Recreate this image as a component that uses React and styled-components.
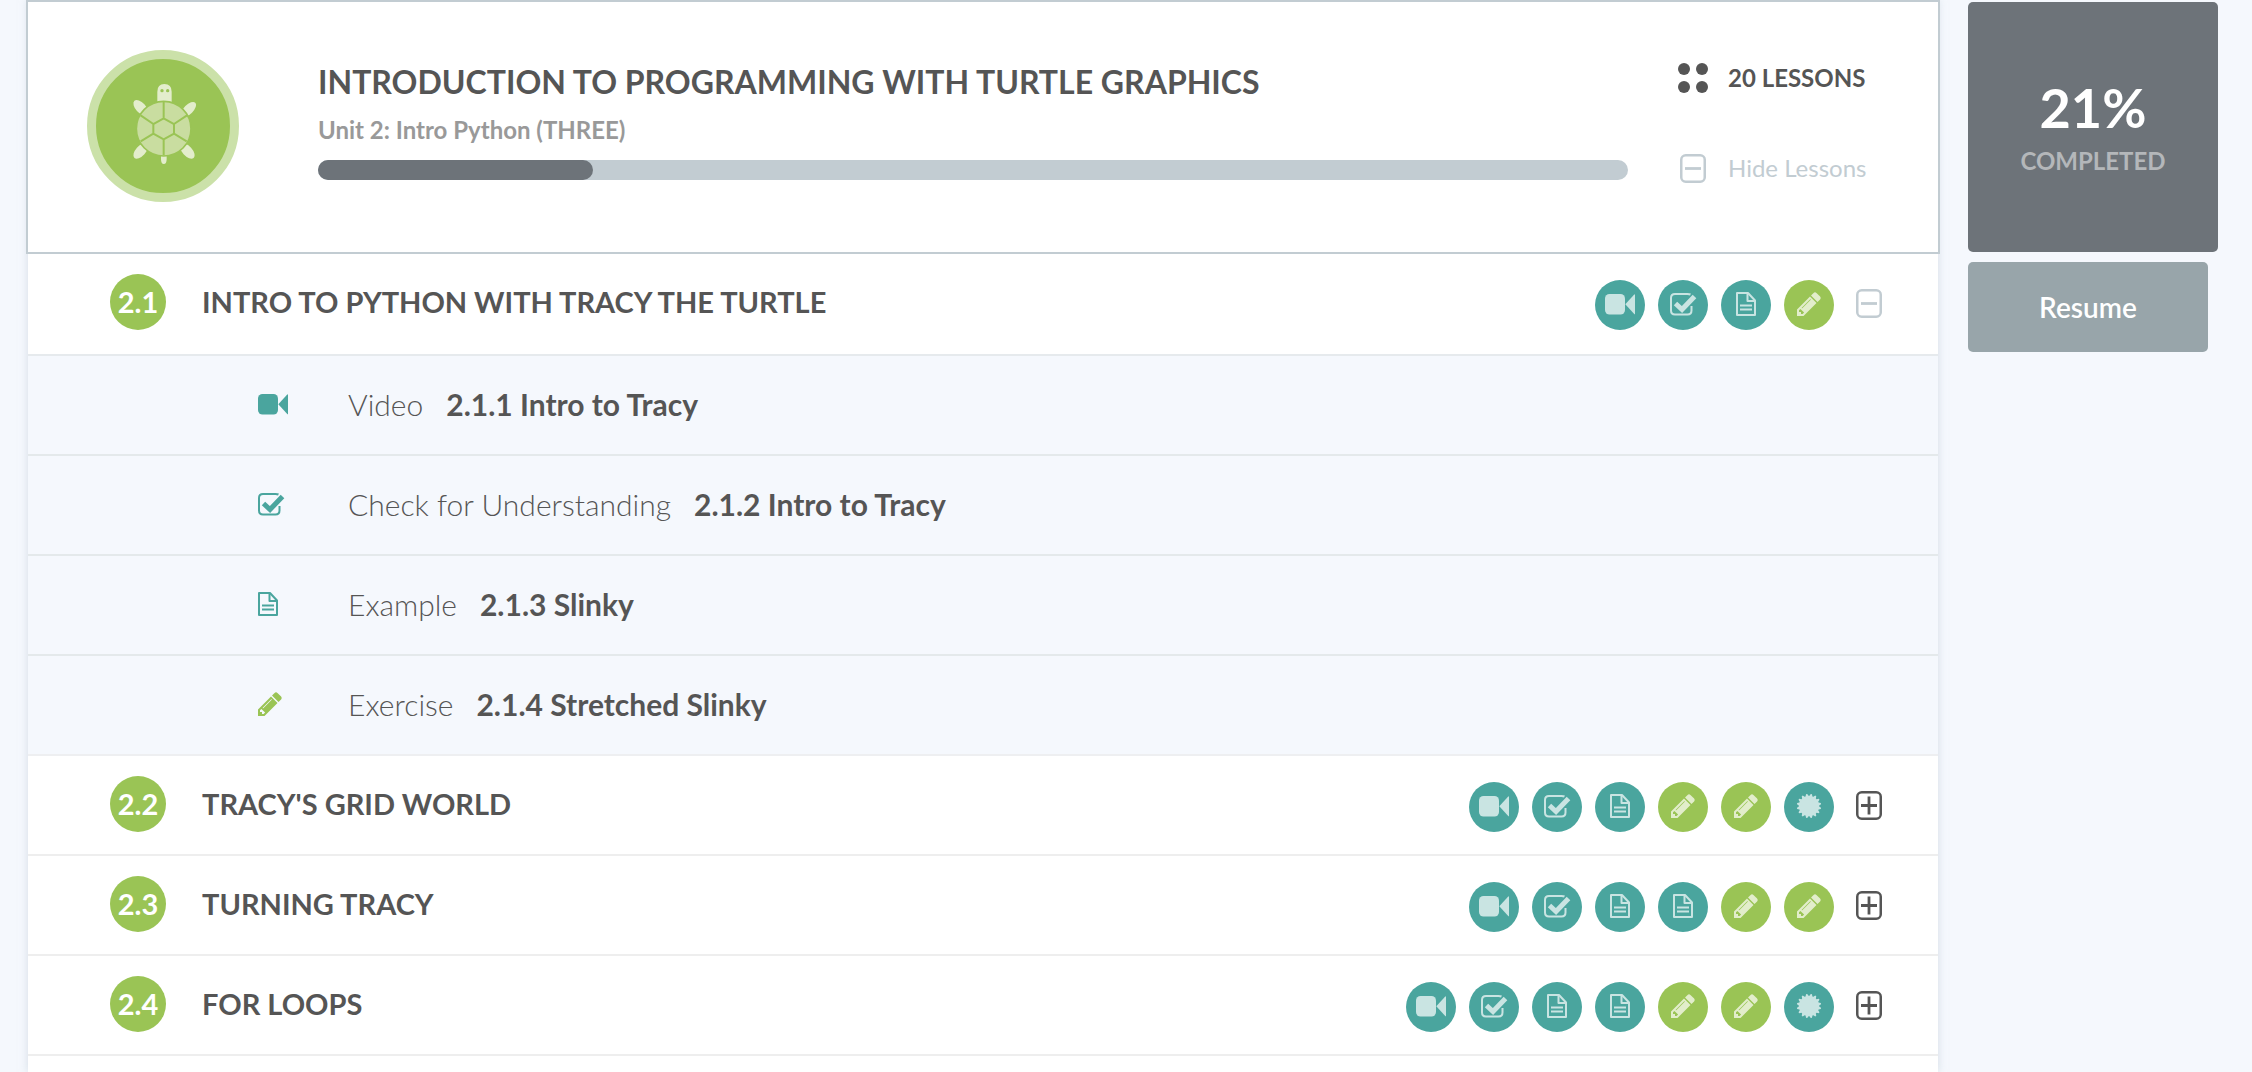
import React, { useState } from 'react';
import styled, { createGlobalStyle } from 'styled-components';

const color = {
  page: '#f5f8fd',
  text: '#555555',
  muted: '#999999',
  teal: '#4aa59e',
  green: '#9ac455',
  ring: '#cbe1a9',
  mist: '#c2ccd2',
  slate: '#6d7379',
  steel: '#98a5aa',
};

const GlobalStyle = createGlobalStyle`
  *, *::before, *::after { box-sizing: border-box; }
  body {
    margin: 0;
    background: ${color.page};
    color: ${color.text};
    font-family: Lato, "Open Sans", sans-serif;
  }
  h1, h2, p, ul { margin: 0; padding: 0; }
  ul { list-style: none; }
  button { font-family: inherit; border: 0; padding: 0; background: none; cursor: pointer; }
  a { color: inherit; text-decoration: none; }
  svg { display: block; flex: none; }
`;

const Page = styled.div`
  display: flex;
  align-items: flex-start;
  gap: 30px;
  padding: 0 34px 0 28px;
`;

const Module = styled.main`
  flex: 1;
  min-width: 0;
  min-height: 100vh;
  background: #ffffff;
  box-shadow: 0 0 8px rgba(180, 196, 208, 0.5);
`;

const ModuleHeader = styled.header`
  display: flex;
  align-items: flex-start;
  margin: 0 -2px;
  padding: 48px 68px 50px 59px;
  border: 2px solid ${color.mist};
`;

const ModuleBadge = styled.div`
  display: flex;
  flex: none;
  align-items: center;
  justify-content: center;
  width: 152px;
  height: 152px;
  margin-right: 79px;
  border: 9px solid ${color.ring};
  border-radius: 50%;
  background: ${color.green};
`;

const ModuleInfo = styled.div`
  flex: 1;
  min-width: 0;
  padding-top: 12px;
`;

const ModuleTitle = styled.h1`
  font-size: 32px;
  line-height: 40px;
  font-weight: 700;
`;

const ModuleUnit = styled.p`
  margin-top: 13px;
  color: ${color.muted};
  font-size: 24px;
  line-height: 30px;
  font-weight: 700;
`;

const Progress = styled.div`
  height: 20px;
  margin-top: 15px;
  border-radius: 10px;
  background: ${color.mist};
`;

const ProgressFill = styled.div`
  height: 100%;
  border-radius: 10px;
  background: ${color.slate};
`;

const Meta = styled.div`
  display: flex;
  flex: none;
  flex-direction: column;
  gap: 60px;
  width: 192px;
  margin-left: 50px;
  padding-top: 13px;
  font-size: 24px;
  line-height: 30px;
  white-space: nowrap;
`;

const MetaIcon = styled.span`
  display: flex;
  justify-content: center;
  width: 30px;
`;

const LessonCount = styled.p`
  display: flex;
  align-items: center;
  gap: 20px;
  font-weight: 700;
`;

const HideButton = styled.button`
  display: flex;
  align-items: center;
  gap: 20px;
  color: ${color.mist};
  font-size: 24px;
  line-height: 30px;
`;

const LessonHeader = styled.div`
  display: flex;
  align-items: flex-end;
  padding: 20px 56px ${(p) => (p.$open ? 24 : 22)}px 82px;
  border-bottom: 2px solid ${(p) => (p.$open ? '#e6eaed' : '#eeeeee')};
`;

const LessonNumber = styled.span`
  flex: none;
  width: 56px;
  height: 56px;
  margin-right: 36px;
  border-radius: 50%;
  background: ${color.green};
  color: #ffffff;
  font-size: 29px;
  line-height: 56px;
  font-weight: 700;
  text-align: center;
`;

const LessonTitle = styled.h2`
  flex: 1;
  min-width: 0;
  font-size: 29px;
  line-height: 56px;
  font-weight: 700;
`;

const IconStrip = styled.div`
  display: flex;
  align-items: center;
  gap: 13px;
`;

const IconLink = styled.a`
  display: flex;
  align-items: center;
  justify-content: center;
  width: 50px;
  height: 50px;
  padding-bottom: 2px;
  border-radius: 50%;
  background: ${(p) => (p.$kind === 'exercise' ? color.green : color.teal)};
  color: ${(p) => (p.$kind === 'exercise' ? '#e2edcb' : '#c9e4e2')};
`;

const ToggleButton = styled.button`
  margin-left: 9px;
  padding-bottom: 3px;
  color: ${(p) => (p.$open ? color.mist : color.text)};
`;

const Item = styled.li`
  border-bottom: 2px solid #e4e9eb;
  background: ${color.page};

  &:last-child { border-bottom-color: #eeeff1; }
`;

const ItemLink = styled.a`
  display: flex;
  align-items: center;
  height: 98px;
  padding: 0 0 2px 230px;
  font-size: 30px;
  line-height: 38px;
`;

const ItemIcon = styled.span`
  width: 90px;
  color: ${(p) => (p.$kind === 'exercise' ? color.green : color.teal)};
`;

const ItemType = styled.span`
  margin-right: 23px;
  font-weight: 300;
`;

const ItemName = styled.span`
  font-weight: 700;
`;

const Sidebar = styled.aside`
  display: flex;
  flex: none;
  flex-direction: column;
  align-items: flex-start;
  gap: 10px;
  width: 250px;
  padding-top: 2px;
`;

const ScoreCard = styled.div`
  width: 100%;
  height: 250px;
  padding-top: 76px;
  border-radius: 5px;
  background: ${color.slate};
  text-align: center;
`;

const ScoreValue = styled.p`
  color: #ffffff;
  font-size: 54px;
  line-height: 60px;
  font-weight: 700;
`;

const ScoreLabel = styled.p`
  margin-top: 8px;
  color: #b4b7ba;
  font-size: 24px;
  line-height: 30px;
  font-weight: 700;
`;

const ResumeButton = styled.button`
  width: 240px;
  height: 90px;
  border-radius: 5px;
  background: ${color.steel};
  color: #ffffff;
  font-size: 28px;
  font-weight: 600;
`;

function Turtle() {
  return (
    <svg width="68" height="84" viewBox="27 27 204 252" aria-hidden="true">
      <g fill="#e3edcc">
        <path d="M112 81V50Q112 27 133 27Q155 27 155 50V81Q133 76 112 81Z" />
        <ellipse cx="62" cy="98" rx="28" ry="15" transform="rotate(48 62 98)" />
        <ellipse cx="206" cy="103" rx="28" ry="14" transform="rotate(-45 206 103)" />
        <ellipse cx="62" cy="228" rx="28" ry="15" transform="rotate(-48 62 228)" />
        <ellipse cx="202" cy="228" rx="28" ry="15" transform="rotate(48 202 228)" />
        <path d="M123 240H140V252Q140 267 131.500 267Q123 267 123 252Z" />
      </g>
      <circle cx="126" cy="47" r="5" fill={color.green} />
      <circle cx="143" cy="47" r="5" fill={color.green} />
      <circle cx="131" cy="161" r="82" fill="#c9dda0" stroke={color.green} strokeWidth="5" />
      <path
        d="M131 130L162 147V176L131 193L100 176V147ZM131 130V80M162 147L201 121M162 176L200 199M131 193V241M100 176L62 199M100 147L62 121"
        fill="none"
        stroke={color.green}
        strokeWidth="6"
      />
    </svg>
  );
}

function DotsIcon() {
  return (
    <svg width="30" height="30" viewBox="0 0 30 30" fill="currentColor" aria-hidden="true">
      <circle cx="6" cy="6" r="6" />
      <circle cx="24" cy="6" r="6" />
      <circle cx="6" cy="24" r="6" />
      <circle cx="24" cy="24" r="6" />
    </svg>
  );
}

function ToggleIcon({ open }) {
  return (
    <svg width="26" height="29" viewBox="0 0 26 29" fill="none" stroke="currentColor" aria-hidden="true">
      <rect x="1.250" y="1.250" width="23.500" height="26.500" rx="4.500" strokeWidth="2.500" />
      <path d={open ? 'M5 14.500H21' : 'M5 14.500H21M13 5.500V23.500'} strokeWidth="2.800" />
    </svg>
  );
}

const sealPoints = Array.from({ length: 64 }, (_, i) => {
  const radius = i % 4 < 2 ? 12.2 : 10.2;
  const angle = ((i + 1.5) / 64) * Math.PI * 2;
  return `${(12 + radius * Math.cos(angle)).toFixed(2)},${(12 + radius * Math.sin(angle)).toFixed(2)}`;
}).join(' ');

function Glyph({ kind }) {
  if (kind === 'video') {
    return (
      <svg width="30" height="21" viewBox="0 0 30 21" fill="currentColor" aria-hidden="true">
        <rect width="20" height="20.500" rx="4.500" />
        <path d="M20.300 10.200L29 0.800Q30.300-0.300 30.300 1V19.500Q30.300 21 29 19.800Z" />
      </svg>
    );
  }
  if (kind === 'check') {
    return (
      <svg width="27" height="23" viewBox="0 0 27 23" fill="none" stroke="currentColor" aria-hidden="true">
        <path d="M20.500 1.500Q19.500 1 17.500 1H5Q1 1 1 5V17.500Q1 21.500 5 21.500H17.500Q21.500 21.500 21.500 17.500V13" strokeWidth="2" />
        <path d="M5.500 10.500L12 16.500L24.500 3.500" strokeWidth="5" />
      </svg>
    );
  }
  if (kind === 'example') {
    return (
      <svg width="20" height="24" viewBox="0 0 20 24" fill="none" stroke="currentColor" strokeWidth="2" strokeLinejoin="round" aria-hidden="true">
        <path d="M1 1H12L19 8.500V23H1Z" />
        <path d="M11.500 1V9H19M4 13.500H16M4 17.500H16" />
      </svg>
    );
  }
  if (kind === 'exercise') {
    return (
      <svg width="24" height="24" viewBox="0 128 1536 1536" fill="currentColor" aria-hidden="true">
        <path d="M363 1536l91-91-235-235-91 91v107h128v128h107zM886 608q0-22-22-22-10 0-17 7l-542 542q-7 7-7 17 0 22 22 22 10 0 17-7l542-542q7-7 7-17zM832 416l416 416-832 832h-416v-416zM1515 512q0 53-37 90l-166 166-416-416 166-165q36-38 90-38 53 0 91 38l235 234q37 39 37 91z" />
      </svg>
    );
  }
  return (
    <svg width="24" height="24" viewBox="0 0 24 24" fill="currentColor" aria-hidden="true">
      <polygon points={sealPoints} />
    </svg>
  );
}

const kindLabels = {
  video: 'Video',
  check: 'Check for Understanding',
  example: 'Example',
  exercise: 'Exercise',
  badge: 'Badge',
};

const lessons = [
  {
    number: '2.1',
    title: 'INTRO TO PYTHON WITH TRACY THE TURTLE',
    icons: ['video', 'check', 'example', 'exercise'],
    items: [
      { kind: 'video', name: '2.1.1 Intro to Tracy' },
      { kind: 'check', name: '2.1.2 Intro to Tracy' },
      { kind: 'example', name: '2.1.3 Slinky' },
      { kind: 'exercise', name: '2.1.4 Stretched Slinky' },
    ],
  },
  {
    number: '2.2',
    title: "TRACY'S GRID WORLD",
    icons: ['video', 'check', 'example', 'exercise', 'exercise', 'badge'],
    items: [],
  },
  {
    number: '2.3',
    title: 'TURNING TRACY',
    icons: ['video', 'check', 'example', 'example', 'exercise', 'exercise'],
    items: [],
  },
  {
    number: '2.4',
    title: 'FOR LOOPS',
    icons: ['video', 'check', 'example', 'example', 'exercise', 'exercise', 'badge'],
    items: [],
  },
];

function Lesson({ lesson, open, onToggle }) {
  return (
    <section>
      <LessonHeader $open={open}>
        <LessonNumber>{lesson.number}</LessonNumber>
        <LessonTitle>{lesson.title}</LessonTitle>
        <IconStrip>
          {lesson.icons.map((kind, i) => (
            <IconLink key={i} href="#" $kind={kind} aria-label={kindLabels[kind]}>
              <Glyph kind={kind} />
            </IconLink>
          ))}
          <ToggleButton type="button" $open={open} aria-expanded={open} aria-label={`Toggle ${lesson.number}`} onClick={onToggle}>
            <ToggleIcon open={open} />
          </ToggleButton>
        </IconStrip>
      </LessonHeader>
      {open && (
        <ul>
          {lesson.items.map((item) => (
            <Item key={item.name}>
              <ItemLink href="#">
                <ItemIcon $kind={item.kind}>
                  <Glyph kind={item.kind} />
                </ItemIcon>
                <ItemType>{kindLabels[item.kind]}</ItemType>
                <ItemName>{item.name}</ItemName>
              </ItemLink>
            </Item>
          ))}
        </ul>
      )}
    </section>
  );
}

export default function App() {
  const [openLesson, setOpenLesson] = useState('2.1');
  const [showLessons, setShowLessons] = useState(true);
  const percent = 21;

  return (
    <>
      <GlobalStyle />
      <Page>
        <Module>
          <ModuleHeader>
            <ModuleBadge>
              <Turtle />
            </ModuleBadge>
            <ModuleInfo>
              <ModuleTitle>INTRODUCTION TO PROGRAMMING WITH TURTLE GRAPHICS</ModuleTitle>
              <ModuleUnit>Unit 2: Intro Python (THREE)</ModuleUnit>
              <Progress role="progressbar" aria-label="Completed" aria-valuenow={percent} aria-valuemin={0} aria-valuemax={100}>
                <ProgressFill style={{ width: `${percent}%` }} />
              </Progress>
            </ModuleInfo>
            <Meta>
              <LessonCount>
                <MetaIcon>
                  <DotsIcon />
                </MetaIcon>
                20 LESSONS
              </LessonCount>
              <HideButton type="button" onClick={() => setShowLessons(!showLessons)}>
                <MetaIcon>
                  <ToggleIcon open={showLessons} />
                </MetaIcon>
                {showLessons ? 'Hide Lessons' : 'Show Lessons'}
              </HideButton>
            </Meta>
          </ModuleHeader>
          {showLessons &&
            lessons.map((lesson) => (
              <Lesson
                key={lesson.number}
                lesson={lesson}
                open={openLesson === lesson.number}
                onToggle={() => setOpenLesson(openLesson === lesson.number ? null : lesson.number)}
              />
            ))}
        </Module>
        <Sidebar>
          <ScoreCard>
            <ScoreValue>{percent}%</ScoreValue>
            <ScoreLabel>COMPLETED</ScoreLabel>
          </ScoreCard>
          <ResumeButton type="button">Resume</ResumeButton>
        </Sidebar>
      </Page>
    </>
  );
}
